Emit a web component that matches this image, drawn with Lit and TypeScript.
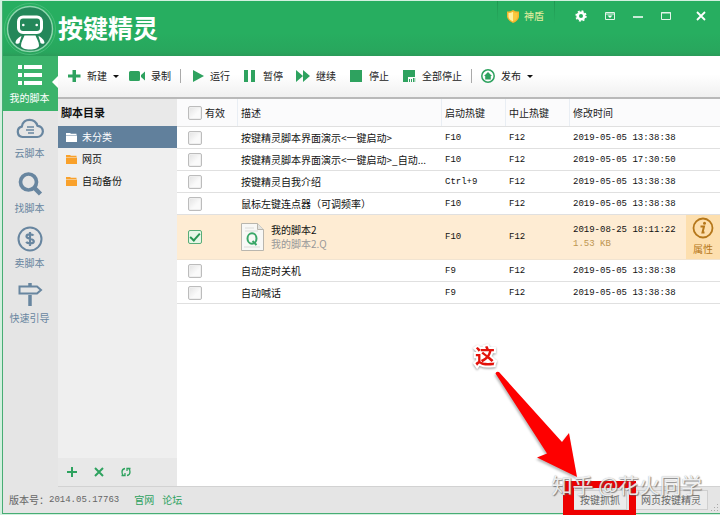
import { LitElement, html, css, svg, nothing } from "lit";
import { customElement, property, state } from "lit/decorators.js";
import { classMap } from "lit/directives/class-map.js";

interface Script {
  name: string;
  start: string;
  stop: string;
  time: string;
  file?: string;
  size?: string;
}

const SCRIPTS: Script[] = [
  { name: "按键精灵脚本界面演示<一键启动>", start: "F10", stop: "F12", time: "2019-05-05 13:38:38" },
  { name: "按键精灵脚本界面演示<一键启动>_自动...", start: "F10", stop: "F12", time: "2019-05-05 17:30:50" },
  { name: "按键精灵自我介绍", start: "Ctrl+9", stop: "F12", time: "2019-05-05 13:38:38" },
  { name: "鼠标左键连点器（可调频率）", start: "F10", stop: "F12", time: "2019-05-05 13:38:38" },
  { name: "我的脚本2", start: "F10", stop: "F12", time: "2019-08-25 18:11:22", file: "我的脚本2.Q", size: "1.53 KB" },
  { name: "自动定时关机", start: "F9", stop: "F12", time: "2019-05-05 13:38:38" },
  { name: "自动喊话", start: "F9", stop: "F12", time: "2019-05-05 13:38:38" },
];

const shared = css`
  * { box-sizing: border-box; }
  button {
    font: inherit;
    color: inherit;
    background: none;
    border: 0;
    padding: 0;
    margin: 0;
    cursor: pointer;
    white-space: nowrap;
  }
  svg { display: block; flex: none; }
`;

@customElement("title-bar")
class TitleBar extends LitElement {
  static styles = [shared, css`
    :host {
      display: flex;
      align-items: flex-start;
      height: 55px;
      background: linear-gradient(#27ae60 0, #27ae60 32px, #28a65d 51px, #2b9b59 55px);
      color: #fff;
    }
    h1 { margin: 0; flex: 1; font-size: 25px; line-height: 52px; font-weight: 700; }
    .shield {
      display: flex;
      align-items: center;
      gap: 5px;
      height: 30px;
      padding: 0 10px 0 9px;
      color: #e9f0a0;
      border: 1px solid;
      border-width: 0 1px;
      border-image: linear-gradient(#1f9651, #27ae60 22px) 1;
    }
    .tools { display: flex; height: 30px; align-items: center; gap: 16px; padding: 0 13px 0 19px; }
    .close { margin-left: 7px; }
  `];
  render() {
    return html`
      <svg width="55" height="55" viewBox="-1 0 55 55" aria-hidden="true">
        <circle cx="26" cy="28" r="25.5" fill="none" stroke="#48bb79" stroke-width="1"/>
        <circle cx="26" cy="28" r="22.5" fill="#24875a" stroke="#8fd6ae" stroke-width="1.4"/>
        <rect x="14.5" y="16" width="23" height="15.5" rx="4.5" fill="#24875a" stroke="#fff" stroke-width="3"/>
        <circle cx="19.3" cy="24" r="1.3" fill="#fff"/><circle cx="32.7" cy="24" r="1.3" fill="#fff"/>
        <path d="M20.5 34.5h11c1 3 3.5 6 3.5 10 0 2.5-4 4-9 4s-9-1.500-9-4c0-4 2.500-7 3.500-10z" fill="#fff"/>
        <path d="M17.500 35c-3 1.500-6 4-6 7 1.500 1.200 3 1 4 0 .3-2.500 1.600-4.500 2-7zM34.500 35c3 1.500 6 4 6 7-1.500 1.200-3 1-4 0-.3-2.500-1.600-4.500-2-7z" fill="#fff"/>
      </svg>
      <h1>按键精灵</h1>
      <button class="shield">
        <svg width="12" height="13" viewBox="0 0 12 13" aria-hidden="true">
          <path d="M0 1.500Q3 2 6 0 9 2 12 1.500V7Q11 11 6 13 1 11 0 7z" fill="#f7b52c"/>
          <path d="M1.500 3Q4 3 6 1.800V11.500Q2 9.500 1.500 7z" fill="#fff0a0"/>
          <path d="M6 1.800Q8 3 10.500 3V7Q10 9.500 6 11.500z" fill="#fbc940"/>
        </svg>
        <span>神盾</span>
      </button>
      <div class="tools">
        <button aria-label="设置">
          <svg width="14" height="14" viewBox="0 0 14 14" fill="none" stroke="#fff">
            <circle cx="7" cy="7" r="3.300" stroke-width="2.600"/>
            <circle cx="7" cy="7" r="4.900" stroke-width="1.600" stroke-dasharray="1.925 1.925"/>
          </svg>
        </button>
        <button aria-label="菜单">
          <svg width="12" height="14" viewBox="0 0 12 14">
            <path d="M1.500 3.500h9v7h-9zM1 5h10" fill="none" stroke="#e3f5ea"/><path d="M3.500 6.500h5L6 9z" fill="#fff"/>
          </svg>
        </button>
        <button aria-label="最小化">
          <svg width="12" height="14" viewBox="0 0 12 14"><path d="M1 8h10" stroke="#fff" stroke-width="1.500"/></svg>
        </button>
        <button aria-label="最大化">
          <svg width="12" height="14" viewBox="0 0 12 14"><path d="M1.500 3.500h9v7h-9zM1 4h10" fill="none" stroke="#e3f5ea"/></svg>
        </button>
        <button class="close" aria-label="关闭">
          <svg width="12" height="14" viewBox="0 0 12 14"><path d="M2 3l8 8M10 3l-8 8" stroke="#fff" stroke-width="1.800"/></svg>
        </button>
      </div>`;
  }
}

@customElement("side-nav")
class SideNav extends LitElement {
  @state() active = 0;
  static styles = [shared, css`
    :host { display: flex; flex-direction: column; width: 55px; background: #e5e5e5; }
    button {
      position: relative;
      display: flex;
      flex-direction: column;
      align-items: center;
      justify-content: flex-end;
      gap: 2px;
      height: 55px;
      padding: 0 2px 5px 0;
      line-height: 16px;
      color: #6886a0;
    }
    .on { color: #fff; background: #3bb36b; }
    .on::after {
      content: "";
      position: absolute;
      right: 0;
      top: 20px;
      border: 6px solid transparent;
      border-left-width: 0;
      border-right-color: #fff;
    }
  `];
  items = [
    ["我的脚本", svg`<path d="M2 5h4v4H2zM8 5h18v4H8zM2 13h4v4H2zM8 13h18v4H8zM2 21h4v4H2zM8 21h18v4H8z" fill="currentColor"/>`],
    ["云脚本", svg`<g fill="none" stroke="currentColor" stroke-width="2.200"><path d="M6.500 22a5.300 5.300 0 0 1-.7-10.400C6.500 7 10 4.800 13.500 4.800s6.800 2.200 8 6A5.600 5.600 0 0 1 21 22z"/><path d="M11 12h7M10 15h8M12 18h6" stroke-width="1.300"/></g>`],
    ["找脚本", svg`<g fill="none" stroke="currentColor"><circle cx="12.500" cy="12" r="8" stroke-width="3.700"/><path d="M18 17.500l6.500 6.500" stroke-width="4.500"/></g>`],
    ["卖脚本", svg`<g fill="none" stroke="currentColor"><circle cx="14" cy="14" r="11.500" stroke-width="2"/><path d="M17.500 10.500c-1-1.500-7-2-7 .9 0 2.900 7.300 1.800 7.300 4.900 0 3-6.500 2.500-7.600.6M14 7v14" stroke-width="2.200"/></g>`],
    ["快速引导", svg`<g fill="none" stroke="currentColor"><path d="M3.500 6.500h17.500l4 3.500-4 3.500H3.500z" stroke-width="2"/><path d="M14 3v3M14 15v11" stroke-width="3.500"/></g>`],
  ] as const;
  render() {
    return this.items.map(([label, icon], i) => html`
      <button class=${classMap({ on: this.active === i })} @click=${() => (this.active = i)}>
        <svg width="28" height="28" viewBox="0 0 28 28" aria-hidden="true">${icon}</svg>
        <span>${label}</span>
      </button>`);
  }
}

@customElement("tool-bar")
class ToolBar extends LitElement {
  static styles = [shared, css`
    :host {
      display: flex;
      align-items: center;
      height: 43px;
      padding: 0 9px 1px;
      background: linear-gradient(#fff 45%, #f0f0f0);
      border-bottom: 2px solid #b9b9b9;
    }
    .group { display: flex; gap: 13px; }
    .first { gap: 10px; }
    .sep { width: 1px; height: 14px; margin: 0 9px; background: #aaa; }
    button { display: flex; align-items: center; gap: 6px; color: #222; line-height: 16px; }
    svg { fill: #2ea25f; }
    .caret { border: 3px solid transparent; border-top-color: #111; border-bottom: 0; }
  `];
  item(label: string, shape: unknown, menu = false) {
    return html`<button>
      <svg width="14" height="14" viewBox="0 0 14 14" aria-hidden="true">${shape}</svg>
      <span>${label}</span>${menu ? html`<i class="caret"></i>` : nothing}
    </button>`;
  }
  render() {
    return html`
      <div class="group first">
        ${this.item("新建", svg`<path d="M5.500 1h3.500v4.500h4.500v3H9V13H5.500V8.500H1v-3h4.500z"/>`, true)}
        <button>
          <svg width="16" height="14" viewBox="0 0 16 14" aria-hidden="true"><path d="M1.500 2h8q1.500 0 1.500 1.500v7q0 1.500-1.500 1.500h-8Q0 12 0 10.500v-7Q0 2 1.500 2zM12 6l4-3.500v9L12 8z"/></svg>
          <span>录制</span>
        </button>
      </div>
      <span class="sep"></span>
      <div class="group">
        ${this.item("运行", svg`<path d="M3 1l11 6-11 6z"/>`)}
        ${this.item("暂停", svg`<path d="M1 1h4v12H1zM8 1h4v12H8z"/>`)}
        ${this.item("继续", svg`<path d="M0 1l7 6-7 6zM7 1l7 6-7 6z"/>`)}
        ${this.item("停止", svg`<path d="M1 1h12v12H1z"/>`)}
        ${this.item("全部停止", svg`<path d="M1 1h12v7H6v5H1zM7 10h1v3H7zM9 10h1v3H9zM11 9h1v4h-1zM12.500 9h.7v4h-.7z"/>`)}
      </div>
      <span class="sep"></span>
      <div class="group">
        ${this.item("发布", svg`<circle cx="7" cy="7" r="6.200" fill="none" stroke="#2ea25f" stroke-width="1.500"/><path d="M7 3l4 4H9.800v3.500H4.200V7H3z"/>`, true)}
      </div>`;
  }
}

@customElement("folder-tree")
class FolderTree extends LitElement {
  @state() active = 0;
  static styles = [shared, css`
    :host {
      display: flex;
      flex-direction: column;
      width: 119px;
      background: #efefef;
    }
    h2 { margin: 0; height: 27px; padding-left: 3px; background: #e9e9e9; font-size: 11px; line-height: 27px; color: #111; }
    ul { list-style: none; margin: 0; padding: 0; flex: 1; }
    li button { display: flex; align-items: center; gap: 5px; width: 100%; height: 22px; padding-left: 8px; color: #111; }
    li svg { fill: #f9a12b; }
    li .on { background: #61809c; color: #fff; }
    li .on svg { fill: #fff; }
    .actions { display: flex; gap: 15px; align-items: center; height: 28px; padding-left: 8px; background: #e8e8e8; }
    .actions svg { fill: none; stroke: #2ea25f; stroke-width: 2; }
  `];
  render() {
    return html`
      <h2>脚本目录</h2>
      <ul>
        ${["未分类", "网页", "自动备份"].map((name, i) => html`<li>
          <button class=${classMap({ on: this.active === i })} @click=${() => (this.active = i)}>
            <svg width="11" height="10" viewBox="0 0 11 10" aria-hidden="true"><path d="M0 2V1h4l1 .800h5.500V3H0zM0 3.600h11V10H0z"/></svg>
            <span>${name}</span>
          </button></li>`)}
      </ul>
      <div class="actions">
        <button aria-label="添加"><svg width="12" height="12" viewBox="0 0 12 12"><path d="M6 1v10M1 6h10"/></svg></button>
        <button aria-label="删除"><svg width="12" height="12" viewBox="0 0 12 12"><path d="M2 2l8 8M10 2l-8 8"/></svg></button>
        <button aria-label="刷新"><svg width="12" height="12" viewBox="0 0 12 12"><path d="M5 2.500Q2 3 2 6q0 2.500 1.500 4M1.500 9.500h3.500V7M7 9.500Q10 9 10 6q0-2.500-1.500-4M10.500 2.500H7V5" stroke-width="1.300"/></svg></button>
      </div>`;
  }
}

@customElement("script-table")
class ScriptTable extends LitElement {
  @property({ attribute: false }) scripts: Script[] = [];
  static styles = [shared, css`
    :host { display: block; flex: 1; min-width: 0; background: #fff; }
    table { width: 100%; table-layout: fixed; border-collapse: separate; border-spacing: 0; color: #111; }
    .c-check { width: 60px; }
    .c-key { width: 64px; }
    .c-time { width: 117px; }
    .c-prop { width: 34px; }
    th, td {
      height: 22px;
      padding: 0 0 0 4px;
      text-align: left;
      font-weight: 400;
      line-height: 14px;
      border-bottom: 1px solid #e0e0e0;
      white-space: nowrap;
      overflow: hidden;
      text-overflow: ellipsis;
    }
    th { height: 28px; background: #fbfbfc; color: #222; }
    th + th:not(:last-child) { box-shadow: inset 1px 0 #e9eef4; }
    th:first-child, td:first-child { padding-left: 11px; }
    label { display: flex; align-items: center; gap: 3px; }
    .mono { font-family: "Liberation Mono", monospace; font-size: 9px; }
    input {
      appearance: none;
      display: block;
      width: 14px;
      height: 14px;
      margin: 0;
      border: 1px solid #bcbcbc;
      border-radius: 2px;
      background: linear-gradient(135deg, #e2e2e2, #fafafa 60%);
      box-shadow: inset 0 0 0 1px #efefef;
    }
    input:checked { border-color: #58ad78; background: #e6f6e6; box-shadow: none; }
    input:checked::after {
      content: "";
      display: block;
      width: 4px;
      height: 8px;
      margin: 0 auto;
      border: solid #279653;
      border-width: 0 2px 2px 0;
      transform: rotate(42deg);
    }
    .sel td { height: 45px; background: #feecd3; border-bottom-color: #f1e4d1; }
    .file { display: flex; align-items: center; gap: 7px; }
    .file small, .size { display: block; color: #999; font-size: 10px; }
    .sel .size { color: #bd9550; font-size: 9px; }
    .sel .prop { padding: 0; background: #fddfae; }
    .prop button { display: flex; flex-direction: column; align-items: center; gap: 2px; width: 100%; color: #b5771a; line-height: 16px; }
  `];
  row(s: Script) {
    const sel = !!s.file;
    return html`<tr class=${classMap({ sel })}>
      <td><input type="checkbox" aria-label=${s.name} .checked=${sel}></td>
      <td>${sel ? html`<div class="file">
        <svg width="23" height="28" viewBox="0 0 23 28" aria-hidden="true">
          <path d="M.5.500h16l6 6v21H.5z" fill="#f8f8f6" stroke="#b9b6ae"/>
          <path d="M16.500.500v6h6" fill="#e4e4e0" stroke="#b9b6ae"/>
          <path d="M4 5h9M4 8h13M3 24h16" stroke="#dcdcda"/>
          <ellipse cx="11" cy="15.500" rx="4.500" ry="5.200" fill="none" stroke="#3aa768" stroke-width="2"/>
          <path d="M11.500 18l4 4" stroke="#3aa768" stroke-width="2"/>
        </svg>
        <div>${s.name}<small>${s.file}</small></div></div>` : s.name}</td>
      <td class="mono">${s.start}</td>
      <td class="mono">${s.stop}</td>
      <td class="mono">${s.time}${s.size ? html`<span class="size">${s.size}</span>` : nothing}</td>
      <td class="prop">${sel ? html`<button>
        <svg width="22" height="22" viewBox="0 0 22 22" aria-hidden="true">
          <circle cx="11" cy="11" r="9.500" fill="none" stroke="#b5771a" stroke-width="1.800"/>
          <circle cx="12.500" cy="6.300" r="1.500" fill="#b5771a"/>
          <path d="M8.500 9.500h3.500l-1.500 6h2" fill="none" stroke="#b5771a" stroke-width="2"/>
        </svg>属性</button>` : nothing}</td>
    </tr>`;
  }
  render() {
    return html`<table>
      <colgroup><col class="c-check"><col><col class="c-key"><col class="c-key"><col class="c-time"><col class="c-prop"></colgroup>
      <thead><tr>
        <th><label><input type="checkbox"><span>有效</span></label></th>
        <th>描述</th><th>启动热键</th><th>中止热键</th><th>修改时间</th><th></th>
      </tr></thead>
      <tbody>${this.scripts.map((s) => this.row(s))}</tbody>
    </table>`;
  }
}

@customElement("status-bar")
class StatusBar extends LitElement {
  static styles = [shared, css`
    :host {
      position: relative;
      display: flex;
      align-items: center;
      height: 26px;
      padding: 0 12px 0 6px;
      background: #e5e5e5;
      color: #666;
    }
    .num { font-family: "Liberation Mono", monospace; font-size: 9px; }
    .links { display: flex; gap: 8px; margin-left: 15px; flex: 1; }
    a { color: #2ea25f; text-decoration: none; }
    .acts { display: flex; gap: 7px; }
    .acts button { height: 20px; padding: 0 6px; border: 1px solid #cfcfcf; background: #ebebeb; }
    .grip { position: absolute; right: 1px; bottom: 1px; fill: #aaa; }
    .mark { position: absolute; right: 0; bottom: -2px; pointer-events: none; }
    .note {
      position: absolute;
      right: 225px;
      bottom: 143px;
      font-size: 20px;
      line-height: 28px;
      font-weight: 700;
      color: #e3120b;
      -webkit-text-stroke: 4px #fff;
      paint-order: stroke fill;
      filter: drop-shadow(0 1px 1px #999);
    }
    .owner {
      position: absolute;
      right: 18px;
      bottom: 14px;
      font-size: 21px;
      line-height: 30px;
      color: rgba(255, 255, 255, 0.85);
      text-shadow: 1px 1px 1px rgba(90, 90, 90, 0.7), 0 0 1px rgba(110, 110, 110, 0.6);
      white-space: nowrap;
      pointer-events: none;
    }
  `];
  render() {
    return html`
      <span>版本号：</span><span class="num">2014.05.17763</span>
      <nav class="links"><a href="#site">官网</a><a href="#forum">论坛</a></nav>
      <div class="acts"><button>按键抓抓</button><button>网页按键精灵</button></div>
      <svg class="grip" width="9" height="9" viewBox="0 0 9 9"><path d="M7 1h1v1H7zM4 4h1v1H4zM7 4h1v1H7zM1 7h1v1H1zM4 7h1v1H4zM7 7h1v1H7z"/></svg>
      <svg class="mark" width="260" height="155" viewBox="460 360 260 155" aria-hidden="true">
        <path d="M495.500 373.500Q496 371 499 372L562 442 569 433 577 477 537 457.500 547 453.500z" fill="#fe0000" style="filter: drop-shadow(-1px 2px 1px #bbb)"/>
        <path d="M563 481h73v34h-73zM574 488v22h55v-22z" fill="#ee0000" fill-rule="evenodd"/>
      </svg>
      <span class="note">这</span>
      <span class="owner">知乎 @花火同学</span>`;
  }
}

@customElement("app-root")
class AppRoot extends LitElement {
  static styles = [shared, css`
    :host {
      display: flex;
      flex-direction: column;
      min-height: 100vh;
      box-sizing: border-box;
      padding: 1px 0 1px 2px;
      background: #d3f0df;
      font: 10px/14px "Noto Sans CJK SC", sans-serif;
    }
    .window { flex: 1; display: flex; flex-direction: column; border: solid #47ad74; border-width: 0 0 1px 1px; }
    .body { flex: 1; display: flex; }
    .main { flex: 1; min-width: 0; display: flex; flex-direction: column; }
    .panes { flex: 1; display: flex; border-bottom: 1px solid #d2d2d2; }
  `];
  render() {
    return html`<div class="window">
      <title-bar></title-bar>
      <div class="body">
        <side-nav></side-nav>
        <div class="main">
          <tool-bar></tool-bar>
          <div class="panes">
            <folder-tree></folder-tree>
            <script-table .scripts=${SCRIPTS}></script-table>
          </div>
        </div>
      </div>
      <status-bar></status-bar>
    </div>`;
  }
}
